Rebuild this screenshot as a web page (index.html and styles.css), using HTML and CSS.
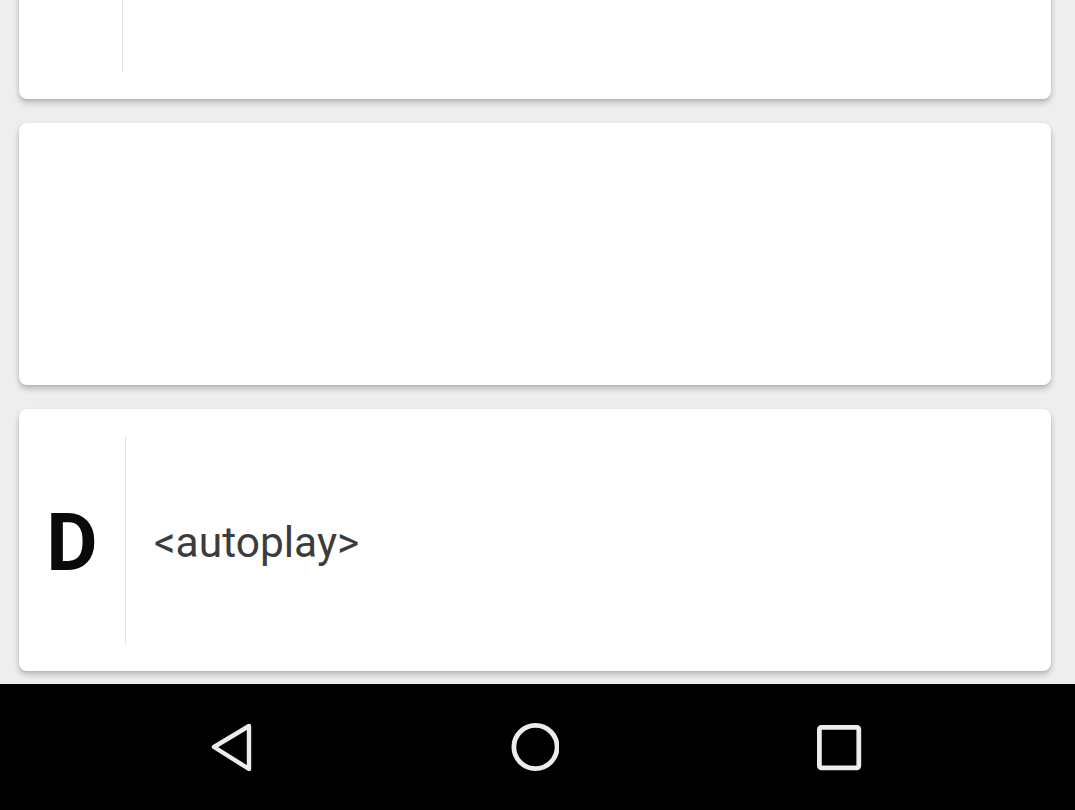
FILE: index.html
```html
<!DOCTYPE html>
<html lang="en">
<head>
<meta charset="utf-8">
<title>Cards</title>
<link rel="stylesheet" href="styles.css">
</head>
<body>
<div class="screen">
  <main class="list">
    <section class="card">
      <div class="letter letter-narrow"></div>
      <div class="divider"></div>
      <div class="content"></div>
    </section>
    <section class="card card-empty"></section>
    <section class="card">
      <div class="letter">D</div>
      <div class="divider"></div>
      <div class="content">&lt;autoplay&gt;</div>
    </section>
  </main>
  <nav class="navbar">
    <svg class="nav-icon" viewBox="0 0 48 48" width="48" height="48" aria-label="Back">
      <path d="M42 3 L7 24 L42 46 Z" fill="none" stroke="#ececec" stroke-width="4.4" stroke-linejoin="round"/>
    </svg>
    <svg class="nav-icon" viewBox="0 0 48 48" width="48" height="48" aria-label="Home">
      <circle cx="24.5" cy="24" r="21.6" fill="none" stroke="#ececec" stroke-width="4.8"/>
    </svg>
    <svg class="nav-icon" viewBox="0 0 48 48" width="48" height="48" aria-label="Recents">
      <rect x="4.4" y="4.4" width="39.4" height="40.4" rx="2" fill="none" stroke="#ececec" stroke-width="4.8"/>
    </svg>
  </nav>
</div>
</body>
</html>
```

FILE: styles.css
```css
* {
  box-sizing: border-box;
}

html, body {
  margin: 0;
  padding: 0;
  background: #eeeeee;
  font-family: Roboto, "Noto Sans", "Liberation Sans", sans-serif;
}

.screen {
  width: 1075px;
  height: 810px;
  display: flex;
  flex-direction: column;
  overflow: hidden;
}

.list {
  height: 684px;
  flex-shrink: 0;
  display: flex;
  flex-direction: column;
  justify-content: flex-end;
  gap: 24px;
  padding: 0 24px 13px 19px;
  overflow: hidden;
}

.card {
  flex-shrink: 0;
  height: 262px;
  background: #ffffff;
  border-radius: 8px;
  box-shadow: 0 4px 6px rgba(0, 0, 0, 0.2), 0 1px 3px rgba(0, 0, 0, 0.1);
  display: flex;
  align-items: stretch;
}

.letter {
  width: 106px;
  flex-shrink: 0;
  display: flex;
  align-items: center;
  justify-content: center;
  padding-top: 6px;
  font-size: 79px;
  font-weight: 700;
  color: #0a0a0a;
  line-height: 1;
}

.letter-narrow {
  width: 103px;
}

.divider {
  width: 1px;
  flex-shrink: 0;
  margin: 27px 0 26px;
  background: #e4e4e4;
}

.content {
  flex: 1;
  display: flex;
  align-items: center;
  padding-left: 28px;
  padding-top: 6px;
  font-size: 42.5px;
  color: #3c3c3c;
  line-height: 1;
}

.navbar {
  flex: 1;
  background: #000000;
  display: flex;
  align-items: center;
  gap: 256px;
  padding-left: 207px;
}

.nav-icon {
  display: block;
  flex-shrink: 0;
}
```
